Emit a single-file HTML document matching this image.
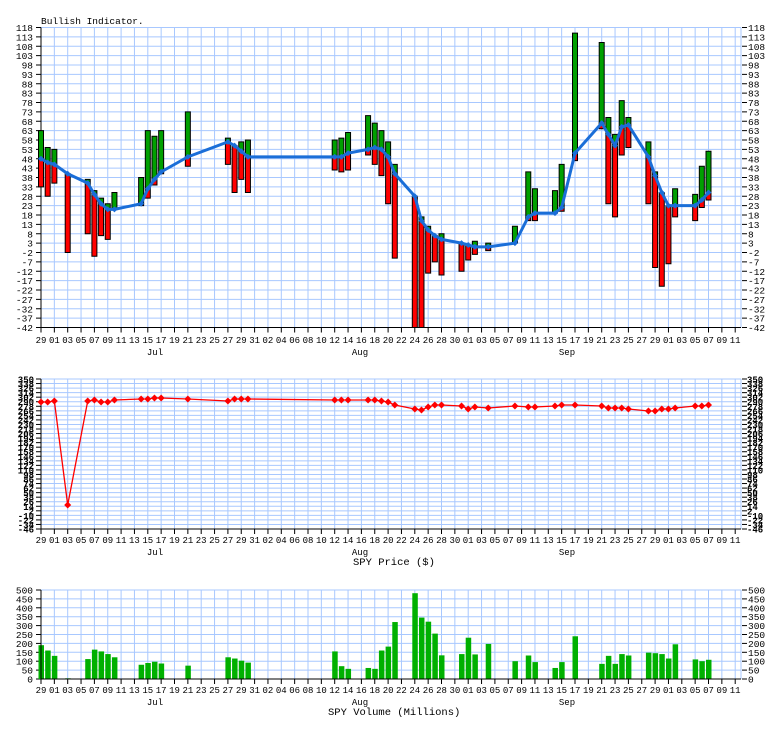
<!DOCTYPE html>
<html><head><meta charset="utf-8">
<style>
html,body{margin:0;padding:0;background:#fff;}
svg{display:block;}
text{font-family:"Liberation Mono","DejaVu Sans Mono",monospace;}
</style></head>
<body>
<svg id="s" width="784" height="729" xmlns="http://www.w3.org/2000/svg"></svg>
<script>
var o=[];
var X0=41,X1=741,DW=6.675,GS=13.35;
function X(d){return X0+d*DW;}
var labels="29 01 03 05 07 09 11 13 15 17 19 21 23 25 27 29 31 02 04 06 08 10 12 14 16 18 20 22 24 26 28 30 01 03 05 07 09 11 13 15 17 19 21 23 25 27 29 01 03 05 07 09 11".split(" ");
var grid="#a8c8ff";
function vgrid(y0,y1){for(var i=1;i<=52;i++){var x=X0+i*GS;o.push('<line x1="'+x+'" y1="'+y0+'" x2="'+x+'" y2="'+y1+'" stroke="'+grid+'" stroke-width="1"/>');}}
function xlabels(yAxis,ly,my){
 for(var i=0;i<labels.length;i++){var x=X0+i*GS;
  o.push('<line x1="'+x+'" y1="'+yAxis+'" x2="'+x+'" y2="'+(yAxis+5)+'" stroke="#000"/>');
  o.push('<text x="'+x+'" y="'+ly+'" font-size="9" text-anchor="middle">'+labels[i]+'</text>');}
 o.push('<text x="155" y="'+my+'" font-size="9" text-anchor="middle">Jul</text>');
 o.push('<text x="360" y="'+my+'" font-size="9" text-anchor="middle">Aug</text>');
 o.push('<text x="567" y="'+my+'" font-size="9" text-anchor="middle">Sep</text>');
}
function axes(y0,y1){
 o.push('<line x1="'+X0+'" y1="'+y0+'" x2="'+X0+'" y2="'+y1+'" stroke="#000"/>');
 o.push('<line x1="'+X1+'" y1="'+y0+'" x2="'+X1+'" y2="'+y1+'" stroke="'+grid+'"/>');
 o.push('<line x1="'+X0+'" y1="'+y1+'" x2="'+X1+'" y2="'+y1+'" stroke="#000"/>');
}
/* ---------- Chart 1 ---------- */
var T=27.5,B=327.5;
function Y(v){return T+(118-v)*1.875;}
for(var v=118;v>=-42;v-=5){var y=Y(v);
 o.push('<line x1="'+X0+'" y1="'+y+'" x2="'+X1+'" y2="'+y+'" stroke="'+grid+'"/>');
 o.push('<line x1="36" y1="'+y+'" x2="'+X0+'" y2="'+y+'" stroke="#000"/>');
 o.push('<line x1="'+(X1+1)+'" y1="'+y+'" x2="'+(X1+6)+'" y2="'+y+'" stroke="#000"/>');
 o.push('<text x="33" y="'+(y+3.5)+'" font-size="9.5" text-anchor="end">'+v+'</text>');
 o.push('<text x="748" y="'+(y+3.5)+'" font-size="9.5">'+v+'</text>');}
vgrid(T,B);axes(T,B);xlabels(B,343,355);
o.push('<text x="41" y="24" font-size="9.5">Bullish Indicator.</text>');
var bars=[[0,63,48,33],[1,54,46,28],[2,53,45,35],[4,40,40,-2],[7,37,35,8],[8,31,29,-4],[9,27,24,7],[10,24,21,5],[11,30,21,21],
[15,38,24,23],[16,63,32,27],[17,60,37,34],[18,63,41,40],[22,73,49,44],[28,59,57,45],[29,55,55,30],[30,57,52,37],[31,58,49,30],
[44,58,49,42],[45,59,49,41],[46,62,51,42],[49,71,53,50],[50,67,54,45],[51,63,53,39],[52,57,49,24],[53,45,40,-5],
[56,28,28,-42],[57,17,15,-42],[58,12,10,-13],[59,7,7,-7],[60,8,5,-14],[63,3,3,-12],[64,2,2,-6],[65,4,1,-3],[67,3,1,-1],
[71,12,3,3],[73,41,17,15],[74,32,19,15],[77,31,19,19],[78,45,22,20],[80,115,51,47],[84,110,67,64],[85,70,61,24],[86,61,55,17],
[87,79,65,50],[88,70,66,54],[91,57,49,24],[92,41,39,-10],[93,30,30,-20],[94,23,23,-8],[95,32,23,17],[98,29,23,15],[99,44,26,22],[100,52,30,26]];
var pts=[];
bars.forEach(function(b){var x=X(b[0])-2.5,w=5;
 var yt=Y(b[1]),yl=Y(b[2]),yb=Y(b[3]);
 if(yl-yt>0.5)o.push('<rect x="'+x+'" y="'+yt+'" width="'+w+'" height="'+(yl-yt)+'" fill="#00a000" stroke="#000" stroke-width="1"/>');
 if(yb-yl>0.5)o.push('<rect x="'+x+'" y="'+yl+'" width="'+w+'" height="'+(yb-yl)+'" fill="#ff0000" stroke="#000" stroke-width="1"/>');
 pts.push(X(b[0])+','+yl);});
o.push('<polyline points="'+pts.join(' ')+'" fill="none" stroke="#1a6ed8" stroke-width="3" stroke-linejoin="round"/>');
bars.forEach(function(b){var x=X(b[0]),y=Y(b[2]);o.push('<path d="M'+(x-3)+' '+y+'L'+x+' '+(y-3)+'L'+(x+3)+' '+y+'L'+x+' '+(y+3)+'Z" fill="#1a6ed8"/>');});
/* ---------- Chart 2 price ---------- */
var PT=379,PB=529,N=33,ps=(PB-PT)/N;
for(var i=0;i<=N;i++){var y=PT+i*ps;
 o.push('<line x1="'+X0+'" y1="'+y+'" x2="'+X1+'" y2="'+y+'" stroke="'+grid+'"/>');
 o.push('<line x1="36" y1="'+y+'" x2="'+X0+'" y2="'+y+'" stroke="#000"/>');
 o.push('<line x1="'+(X1+1)+'" y1="'+y+'" x2="'+(X1+6)+'" y2="'+y+'" stroke="#000"/>');
 var lv=350-i*12;
 o.push('<text x="34" y="'+(y+3.5)+'" font-size="9" font-weight="bold" text-anchor="end">'+lv+'</text>');
 o.push('<text x="747" y="'+(y+3.5)+'" font-size="9" font-weight="bold">'+lv+'</text>');}
vgrid(PT,PB);axes(PT,PB);xlabels(PB,543,555);
o.push('<text x="353" y="565" font-size="10.5">SPY Price ($)</text>');
var pr=[[0,402],[1,402],[2,401],[4,505],[7,401],[8,400],[9,402],[10,402],[11,400],[15,399],[16,399],[17,398],[18,398],[22,399],[28,401],[29,399],[30,399],[31,399],
[44,400],[45,400],[46,400],[49,400],[50,400],[51,401],[52,402],[53,405],[56,409],[57,410],[58,407],[59,405],[60,405],[63,406],[64,409],[65,407],[67,408],
[71,406],[73,407],[74,407],[77,406],[78,405],[80,405],[84,406],[85,408],[86,408],[87,408],[88,409],[91,411],[92,411],[93,409],[94,409],[95,408],[98,406],[99,406],[100,405]];
o.push('<polyline points="'+pr.map(function(p){return X(p[0])+','+p[1];}).join(' ')+'" fill="none" stroke="#ff0000" stroke-width="1.3"/>');
pr.forEach(function(p){var x=X(p[0]),y=p[1];o.push('<path d="M'+(x-3.5)+' '+y+'L'+x+' '+(y-3.5)+'L'+(x+3.5)+' '+y+'L'+x+' '+(y+3.5)+'Z" fill="#ff0000"/>');});
/* ---------- Chart 3 volume ---------- */
var VT=590,VB=679;
for(var v=0;v<=500;v+=50){var y=VB-v*(VB-VT)/500;
 o.push('<line x1="'+X0+'" y1="'+y+'" x2="'+X1+'" y2="'+y+'" stroke="'+grid+'"/>');
 o.push('<line x1="36" y1="'+y+'" x2="'+X0+'" y2="'+y+'" stroke="#000"/>');
 o.push('<line x1="'+(X1+1)+'" y1="'+y+'" x2="'+(X1+6)+'" y2="'+y+'" stroke="#000"/>');
 o.push('<text x="33" y="'+(y+3.5)+'" font-size="9.5" text-anchor="end">'+v+'</text>');
 o.push('<text x="748" y="'+(y+3.5)+'" font-size="9.5">'+v+'</text>');}
vgrid(VT,VB);
var vol=[[0,190],[1,160],[2,130],[4,4],[7,112],[8,165],[9,155],[10,140],[11,122],[15,80],[16,90],[17,97],[18,87],[22,75],[28,122],[29,115],[30,103],[31,92],
[44,155],[45,72],[46,57],[49,62],[50,57],[51,160],[52,182],[53,320],[56,482],[57,345],[58,322],[59,255],[60,133],[63,140],[64,232],[65,138],[67,197],
[71,100],[73,132],[74,95],[77,62],[78,95],[80,240],[84,85],[85,130],[86,85],[87,140],[88,132],[91,148],[92,145],[93,140],[94,115],[95,195],[98,110],[99,100],[100,108]];
vol.forEach(function(p){var h=p[1]*(VB-VT)/500;o.push('<rect x="'+(X(p[0])-2.5)+'" y="'+(VB-h)+'" width="5.5" height="'+h+'" fill="#00b000"/>');});
axes(VT,VB);xlabels(VB,693,705);
o.push('<text x="328" y="715" font-size="10.5">SPY Volume (Millions)</text>');
document.getElementById('s').innerHTML=o.join('');
</script>
</body></html>
